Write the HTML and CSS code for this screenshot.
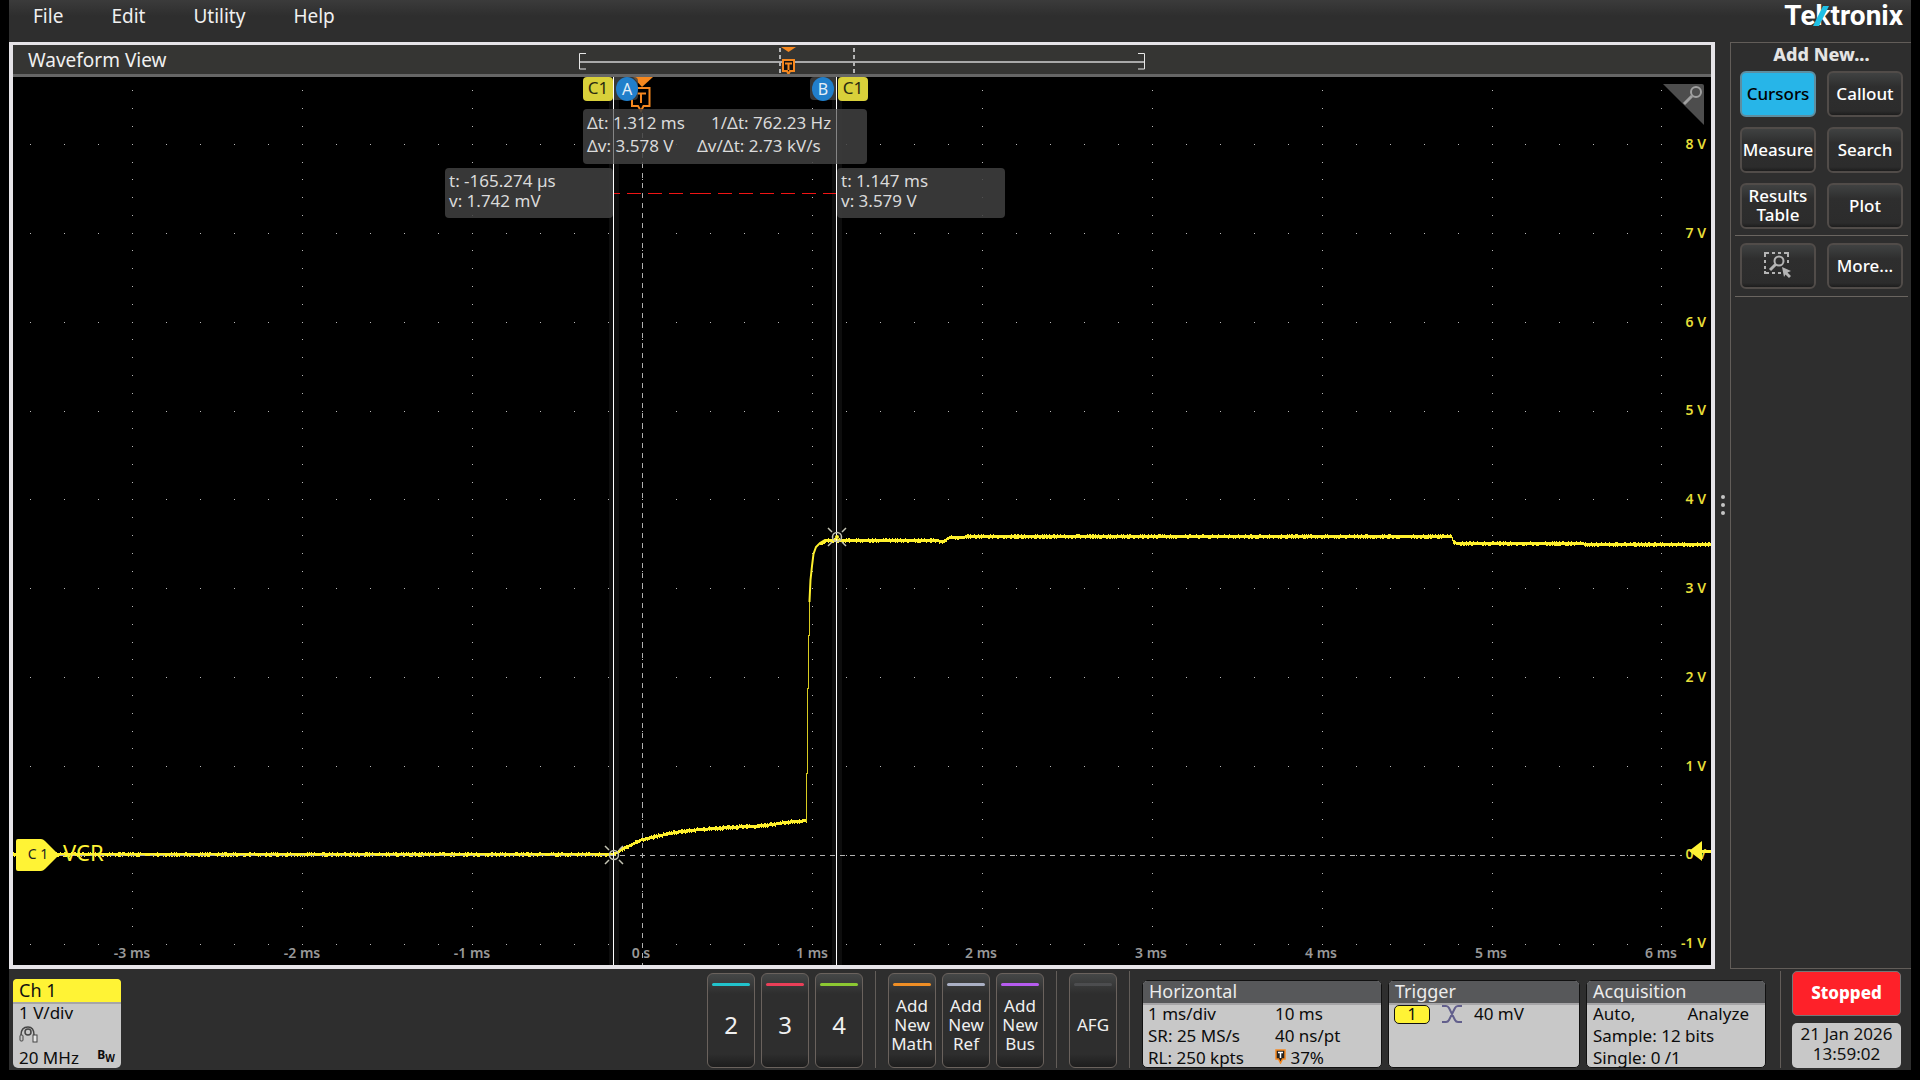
FILE: index.html
```html
<!DOCTYPE html>
<html lang="en">
<head>
<meta charset="utf-8">
<title>Waveform View</title>
<link rel="stylesheet" href="styles.css">
</head>
<body>
<div class="app">
  <header class="topbar">
    <nav class="menu">
      <button class="menu-item">File</button>
      <button class="menu-item">Edit</button>
      <button class="menu-item">Utility</button>
      <button class="menu-item">Help</button>
    </nav>
    <div class="logo">Tektronix
      <svg class="logo-slash" viewBox="0 0 16 20"><path d="M0 20 10 0h6L6 20z" fill="#1fc0e4"/></svg>
    </div>
  </header>

  <div class="middle">
    <main class="view">
      <div class="view-head">
        <h1 class="view-title">Waveform View</h1>
        <svg class="overview" width="568" height="29" viewBox="0 0 568 29">
          <path d="M8 8.500H1.500v15.500H8M560 8.500h6.500v15.500H560" fill="none" stroke="#e6e6e6"/>
          <path d="M2 17h564" stroke="#a9a9a9" stroke-width="2"/>
          <path d="M202 3v26M276 3v26" stroke="#b4b4b4" stroke-width="2" stroke-dasharray="4 3"/>
          <path d="M203 2h15l-7.500 5z" fill="#f6881f"/>
          <path d="M205 15h11v11h-4l-1.500 3-1.500-3h-4z" fill="#111" stroke="#f6881f" stroke-width="2"/>
          <path d="M207 18.500h7M210.500 18v7" stroke="#f6881f" stroke-width="2"/>
        </svg>
        <span></span>
      </div>
      <svg class="plot" viewBox="13 77 1698 888">
        <path id="grid" fill="#b9b9b9" shape-rendering="crispEdges"/>
        <path id="trace" fill="#fff12d" shape-rendering="crispEdges"/>
        <path d="M806.500 822V773M807.500 774V688M808.500 689V635M809.500 636V601" fill="none" stroke="#d8cb20" shape-rendering="crispEdges"/>
        <path d="M809.500 602V601L810.500 580 812 566 813.500 554 816 547 820 543 825 540H836" fill="none" stroke="#fff12d" stroke-width="2"/>
        <g stroke="#b0b0b0" stroke-dasharray="5 5" shape-rendering="crispEdges">
          <path d="M642.500 103V965"/>
          <path d="M20 855.500H1682"/>
        </g>
        <g class="y-labels">
          <text x="1706" y="149">8 V</text>
          <text x="1706" y="238">7 V</text>
          <text x="1706" y="327">6 V</text>
          <text x="1706" y="415">5 V</text>
          <text x="1706" y="504">4 V</text>
          <text x="1706" y="593">3 V</text>
          <text x="1706" y="682">2 V</text>
          <text x="1706" y="771">1 V</text>
          <text x="1706" y="859">0 V</text>
          <text x="1706" y="948">-1 V</text>
        </g>
        <g class="x-labels">
          <text x="132" y="958">-3 ms</text>
          <text x="302" y="958">-2 ms</text>
          <text x="472" y="958">-1 ms</text>
          <text x="641" y="958">0 s</text>
          <text x="812" y="958">1 ms</text>
          <text x="981" y="958">2 ms</text>
          <text x="1151" y="958">3 ms</text>
          <text x="1321" y="958">4 ms</text>
          <text x="1491" y="958">5 ms</text>
          <text x="1661" y="958">6 ms</text>
        </g>

        <!-- channel handle -->
        <path d="M18 839h23q2 0 4 2l14 14-14 14q-2 2-4 2H18q-2 0-2-2v-28q0-2 2-2z" fill="#fff335"/>
        <text class="tag" x="38" y="859">C 1</text>
        <text class="trace-name" x="63" y="861">VCR</text>
        <!-- trigger level -->
        <path d="M1689 851 1702 841v9h9v3h-9v8z" fill="#fff335"/>
        <!-- zoom corner -->
        <path d="M1663 84h39q2 0 2 2v39z" fill="#4d4d4d"/>
        <g stroke="#a0a0a0" fill="none"><circle cx="1696" cy="92" r="5" stroke-width="2"/><path d="M1692 96l-8 8" stroke-width="3"/></g>

        <!-- trigger position -->
        <path d="M633 77h20l-11 10z" fill="#f6881f"/>
        <path d="M632 88h17.500v18h-6l-2.500 5-3-5h-6z" fill="#000" stroke="#f6881f" stroke-width="2"/>
        <path d="M636 93.500h10M641 93v10" stroke="#f6881f" stroke-width="2"/>

        <!-- cursors -->
        <path d="M609 77h10v888h-10zM832 77h10v888h-10z" fill="#fff" fill-opacity=".05"/>
        <path d="M613.500 77V965M836.500 77V965" stroke="#fff" shape-rendering="crispEdges"/>
        <path d="M614 193.500H836" stroke="#f01414" stroke-dasharray="6 7 14 7 14 7 14 7 21 7 14 7 14 7 14 7 14 7 14 7 20 7" shape-rendering="crispEdges"/>
        <path d="M614 77h20q4 0 4 4v15q0 4-4 4h-20zM836 77h-22q-4 0-4 4v15q0 4 4 4h22z" fill="#454545" fill-opacity=".8"/>
        <rect x="583" y="77" width="30" height="24" rx="4" fill="#d9d03a"/>
        <rect x="838" y="77" width="30" height="24" rx="4" fill="#d9d03a"/>
        <ellipse cx="627" cy="89" rx="11" ry="12" fill="#217fcb"/>
        <ellipse cx="823" cy="89" rx="11" ry="12" fill="#217fcb"/>
        <g class="badge">
          <text x="598" y="94">C1</text>
          <text x="853" y="94">C1</text>
          <text class="badge-letter" x="627" y="95">A</text>
          <text class="badge-letter" x="823" y="95">B</text>
        </g>
        <g fill="#404040" fill-opacity=".86">
          <rect x="583" y="109" width="284" height="55" rx="4"/>
          <rect x="445" y="168" width="168" height="50" rx="4"/>
          <rect x="837" y="168" width="168" height="50" rx="4"/>
        </g>
        <path d="M613.500 109v55M836.500 109v55" stroke="#858585" shape-rendering="crispEdges"/>
        <g class="readout">
          <text x="587" y="129">Δt: 1.312 ms</text>
          <text x="711" y="129">1/Δt: 762.23 Hz</text>
          <text x="587" y="152">Δv: 3.578 V</text>
          <text x="697" y="152">Δv/Δt: 2.73 kV/s</text>
          <text x="449" y="187">t: -165.274 µs</text>
          <text x="449" y="207">v: 1.742 mV</text>
          <text x="841" y="187">t: 1.147 ms</text>
          <text x="841" y="207">v: 3.579 V</text>
        </g>
        <g fill="none" stroke="#c4c4b4" stroke-width="1.500">
          <circle cx="614" cy="855" r="4.500"/>
          <path d="M605 846l4 4M623 846l-4 4M605 864l4-4M623 864l-4-4"/>
          <circle cx="837" cy="537" r="4.500"/>
          <path d="M828 528l4 4M846 528l-4 4M828 546l4-4M846 546l-4-4"/>
        </g>
        <circle cx="837" cy="537" r="2" fill="#fff335"/>
      </svg>
    </main>

    <div class="handle"><i class="handle-dot"></i><i class="handle-dot"></i><i class="handle-dot"></i></div>

    <aside class="sidebar">
      <h2 class="sidebar-title">Add New...</h2>
      <div class="tools">
        <button class="tool active">Cursors</button>
        <button class="tool">Callout</button>
        <button class="tool">Measure</button>
        <button class="tool">Search</button>
        <button class="tool">Results Table</button>
        <button class="tool">Plot</button>
      </div>
      <div class="tools ruled">
        <button class="tool" aria-label="Zoom to area">
          <svg width="28" height="26" viewBox="0 0 28 26" fill="none" stroke="#b4b4b4">
            <path d="M1 5V1h4M8 1h3M14 1h3M20 1h4v4M1 8v3M1 14v3M1 19v2h4M8 21h3M14 21h3M24 8v3" stroke-width="2"/>
            <circle cx="15" cy="9" r="4.500" stroke-width="2"/><path d="M11.500 12.500 6 18" stroke-width="3"/>
            <path d="M18 15l9 4-3.500 1.500L27 24l-2 2-3.500-3.500L20 25z" fill="#b4b4b4" stroke="none"/>
          </svg>
        </button>
        <button class="tool">More...</button>
      </div>
    </aside>
  </div>

  <footer class="bottombar">
    <section class="card channel">
      <h3 class="card-head">Ch 1</h3>
      <div class="card-body">
        <p class="row">1 V/div</p>
        <svg class="probe" width="19" height="17" viewBox="0 0 19 17" fill="none" stroke="#444">
          <path d="M2 9C2 2 6 1 9 1s6 2 6 8" stroke-width="1.500"/><circle cx="9" cy="6" r="3" stroke-width="1.500"/>
          <rect x="1" y="9" width="3" height="6" rx="1"/><rect x="14" y="9" width="4" height="7" fill="#e6e6e6"/>
        </svg>
        <p class="row">20 MHz <b class="bw">B<sub>W</sub></b></p>
      </div>
    </section>

    <div class="group">
      <button class="slot cyan big">2</button>
      <button class="slot red big">3</button>
      <button class="slot green big">4</button>
    </div>
    <div class="group">
      <button class="slot orange">Add New Math</button>
      <button class="slot silver">Add New Ref</button>
      <button class="slot purple">Add New Bus</button>
    </div>
    <div class="group">
      <button class="slot off">AFG</button>
    </div>

    <section class="card dark horizontal">
      <h3 class="card-head">Horizontal</h3>
      <div class="card-body cols">
        <span>1 ms/div</span><span>10 ms</span>
        <span>SR: 25 MS/s</span><span>40 ns/pt</span>
        <span>RL: 250 kpts</span>
        <span><svg width="11" height="15" viewBox="0 0 11 15"><path d="M1 1h9v9H7.500L5.500 14l-2-4H1z" fill="#222" stroke="#f6881f" stroke-width="1.500"/><path d="M3 3.500h5M5.500 3v6" stroke="#fff" stroke-width="1.500"/></svg> 37%</span>
      </div>
    </section>
    <section class="card dark trigger">
      <h3 class="card-head">Trigger</h3>
      <div class="card-body source">
        <span class="pill">1</span>
        <svg width="20" height="18" viewBox="0 0 20 18" fill="none" stroke="#625f8c" stroke-width="2"><path d="M0 1h4q2 0 3 2l6 12q1 2 3 2h4M0 17h4q2 0 3-2l6-12q1-2 3-2h4"/></svg>
        <span>40 mV</span>
      </div>
    </section>
    <section class="card dark acquisition">
      <h3 class="card-head">Acquisition</h3>
      <div class="card-body">
        <p class="row">Auto, <span>Analyze</span></p>
        <p class="row">Sample: 12 bits</p>
        <p class="row">Single: 0 /1</p>
      </div>
    </section>
    <div class="status">
      <button class="stopped">Stopped</button>
      <div class="clock">21 Jan 2026<br>13:59:02</div>
    </div>
  </footer>
</div>
<script src="plot.js"></script>
</body>
</html>
```
FILE: styles.css
```css
* { box-sizing: border-box; }
body {
  margin: 0;
  min-height: 100vh;
  padding: 0 9px 10px;
  display: flex;
  background: #000;
  color: #f0f0f0;
  font-family: "Noto Sans", "Open Sans", sans-serif;
  font-size: 17px;
}
h1, h2, h3, p { margin: 0; font-weight: 400; }
button { font: inherit; color: inherit; cursor: pointer; padding: 0; }

.app { flex: 1; min-width: 0; display: flex; flex-direction: column; background: #2e2e2e; }

.topbar {
  height: 42px;
  display: flex;
  justify-content: space-between;
  padding: 0 8px 0 24px;
  background: linear-gradient(#3b3b3b, #2e2e2e 16px);
}
.menu { display: flex; gap: 48px; height: 32px; }
.menu-item { border: 0; background: none; font-size: 19px; }
.logo {
  position: relative;
  color: #fff;
  font: 700 28px/32px Roboto, "Open Sans", sans-serif;
}
.logo-slash { position: absolute; left: 29px; top: 6px; width: 16px; height: 20px; }

.middle { flex: 1; display: flex; min-height: 0; }
.view {
  flex: 1;
  min-width: 0;
  display: flex;
  flex-direction: column;
  border: 4px solid #e6e4e8;
  border-top-width: 3px;
  background: #000;
}
.view-head {
  height: 32px;
  display: grid;
  grid-template-columns: 1fr auto 1fr;
  background: #353533;
  border-bottom: 3px solid #666;
}
.view-title { padding-left: 15px; font-size: 19px; line-height: 30px; }
.plot { display: block; flex: 1; min-height: 0; width: 100%; }

.y-labels { fill: #e6de38; font-size: 14px; font-weight: 600; text-anchor: end; }
.x-labels { fill: #999; font-size: 14px; font-weight: 600; text-anchor: middle; }
.tag { fill: #222; font-size: 14px; text-anchor: middle; }
.trace-name { fill: #fff335; font-size: 22px; }
.badge { fill: #2a2a10; font-size: 17px; text-anchor: middle; }
.badge-letter { fill: #e4eef8; font-size: 16px; }
.readout { fill: #dadada; font-size: 17px; }

.handle { width: 15px; display: flex; flex-direction: column; align-items: center; justify-content: center; gap: 4px; padding-bottom: 2px; }
.handle-dot { width: 4px; height: 4px; border-radius: 50%; background: #c4c4c4; }

.sidebar { width: 181px; border: solid #625d59; border-width: 1px 0 1px 1px; padding: 0 3px 0 4px; }
.sidebar-title { font-size: 18px; font-weight: 800; line-height: 22px; text-align: center; color: #e4e4e4; }
.tools {
  display: grid;
  grid-template-columns: 1fr 1fr;
  gap: 10px 11px;
  padding: 6px 5px;
  border-bottom: 1px solid #6a6560;
}
.ruled { padding: 7px 5px; }
.tool {
  height: 46px;
  border: 2px solid #514c49;
  border-radius: 6px;
  padding-bottom: 2px;
  background: linear-gradient(#404242, #2e2e2e 14px, #2c2c2c 38px, #1d1d1d);
  color: #fff;
  font-size: 17px;
  font-weight: 500;
  line-height: 19px;
  display: flex;
  align-items: center;
  justify-content: center;
}
.active { background: #27b5e8; border-color: #5d8ea1; color: #000; }

.bottombar { height: 101px; display: flex; align-items: flex-end; padding: 0 10px 2px 4px; }
.card {
  height: 88px;
  border-radius: 5px;
  background: #c8c8c8;
  color: #0c0c0c;
}
.card-head { height: 24px; padding: 0 6px; font-size: 18px; line-height: 20px; border-bottom: 2px solid #a6a5a7; border-radius: 4px 4px 0 0; }
.card-body { margin-top: -2px; padding: 0 6px; line-height: 22px; font-size: 17px; }
.row { display: flex; justify-content: space-between; }
.dark { border: 1px solid #111; }
.dark .card-head { background: #57585a; color: #ececec; }

.channel { width: 108px; height: 89px; margin-right: auto; }
.channel .card-head { background: #fff335; color: #111; height: 25px; line-height: 22px; }
.probe { display: block; margin: 2px 0 4px; }
.bw { font-size: 12px; line-height: 16px; }
.bw sub { font-size: 10px; line-height: 10px; }

.group { display: flex; gap: 6px; height: 97px; align-items: flex-end; padding: 0 12px; border-right: 1px solid #625d59; }
.slot {
  position: relative;
  width: 48px;
  height: 95px;
  border: 1px solid #6a625d;
  border-radius: 6px;
  padding-top: 8px;
  background: linear-gradient(#454747, #2e2e2e 20px, #2e2e2e 80px, #1d1d1d);
  font-size: 17px;
  line-height: 19px;
}
.slot::before { content: ""; position: absolute; left: 4px; right: 4px; top: 9px; height: 3px; border-radius: 2px; background: currentColor; }
.big { font-size: 24px; }
.cyan::before { background: #21c3cc; }
.red::before { background: #ea3f58; }
.green::before { background: #8cc832; }
.orange::before { background: #ef8e25; }
.silver::before { background: #aab0c4; }
.purple::before { background: #b65cf0; }
.off::before { background: #4c4d4f; }

.horizontal { width: 240px; margin-left: 12px; }
.cols { display: grid; grid-template-columns: 127px 1fr; padding-left: 5px; }
.trigger { width: 192px; margin-left: 6px; }
.source { display: flex; align-items: center; gap: 12px; padding-left: 5px; }
.pill { width: 36px; height: 19px; border: 1px solid #111; border-radius: 5px; background: #fff335; text-align: center; font-size: 16px; line-height: 16px; }
.acquisition { width: 180px; margin-left: 6px; }
.acquisition .row span { padding-right: 10px; }
.status { width: 121px; height: 97px; margin-left: 14px; padding-left: 11px; border-left: 1px solid #625d59; display: flex; flex-direction: column; justify-content: space-between; }
.stopped { height: 45px; border: 1px solid #777; border-radius: 5px; padding-bottom: 2px; background: #fe2129; color: #fff; font-size: 17px; font-weight: 800; }
.clock { height: 45px; border-radius: 5px; background: #c8c8c8; color: #111; text-align: center; font-size: 17px; line-height: 20px; padding-top: 1px; }
```
FILE: plot.js
```js
// Graticule: a dot every fifth of a division along each grid line.
const zero = { x: 642, y: 855 };
const div = { x: 169.9, y: 88.9 };
let dots = '';
const dot = (x, y) => { dots += `M${Math.round(x)} ${Math.round(y)}h1v1h-1z`; };
for (let i = -18; i <= 30; i++) {
  for (let j = -1; j <= 8; j++) dot(zero.x + i * div.x / 5, zero.y - j * div.y);
}
for (let i = -3; i <= 6; i++) {
  for (let j = -5; j <= 43; j++) dot(zero.x + i * div.x, zero.y - j * div.y / 5);
}
document.getElementById('grid').setAttribute('d', dots);

// Trace: interpolated samples with a little noise on both edges.
const runs = [
  [[13, 854], [613, 854], [625, 847], [642, 839], [660, 835], [680, 831], [700, 829], [730, 827], [765, 825], [785, 822], [807, 820]],
  [[820, 543], [826, 540], [870, 540], [935, 540], [943, 541], [949, 537], [980, 536], [1451, 536], [1453, 541], [1457, 543], [1711, 544]]
];
let seed = 7;
const rand = () => (seed = (seed * 16807) % 2147483647) / 2147483647;
let d = '';
for (const pts of runs) {
  for (let k = 0; k < pts.length - 1; k++) {
    const [x0, y0] = pts[k];
    const [x1, y1] = pts[k + 1];
    for (let x = x0; x < x1; x++) {
      const y = Math.round(y0 + (y1 - y0) * (x - x0) / (x1 - x0));
      const up = rand() < 0.25 ? 1 : 0;
      const down = rand() < 0.35 ? 1 : 0;
      d += `M${x} ${y - 1 - up}h1v${3 + up + down}h-1z`;
    }
  }
}
document.getElementById('trace').setAttribute('d', d);
```
